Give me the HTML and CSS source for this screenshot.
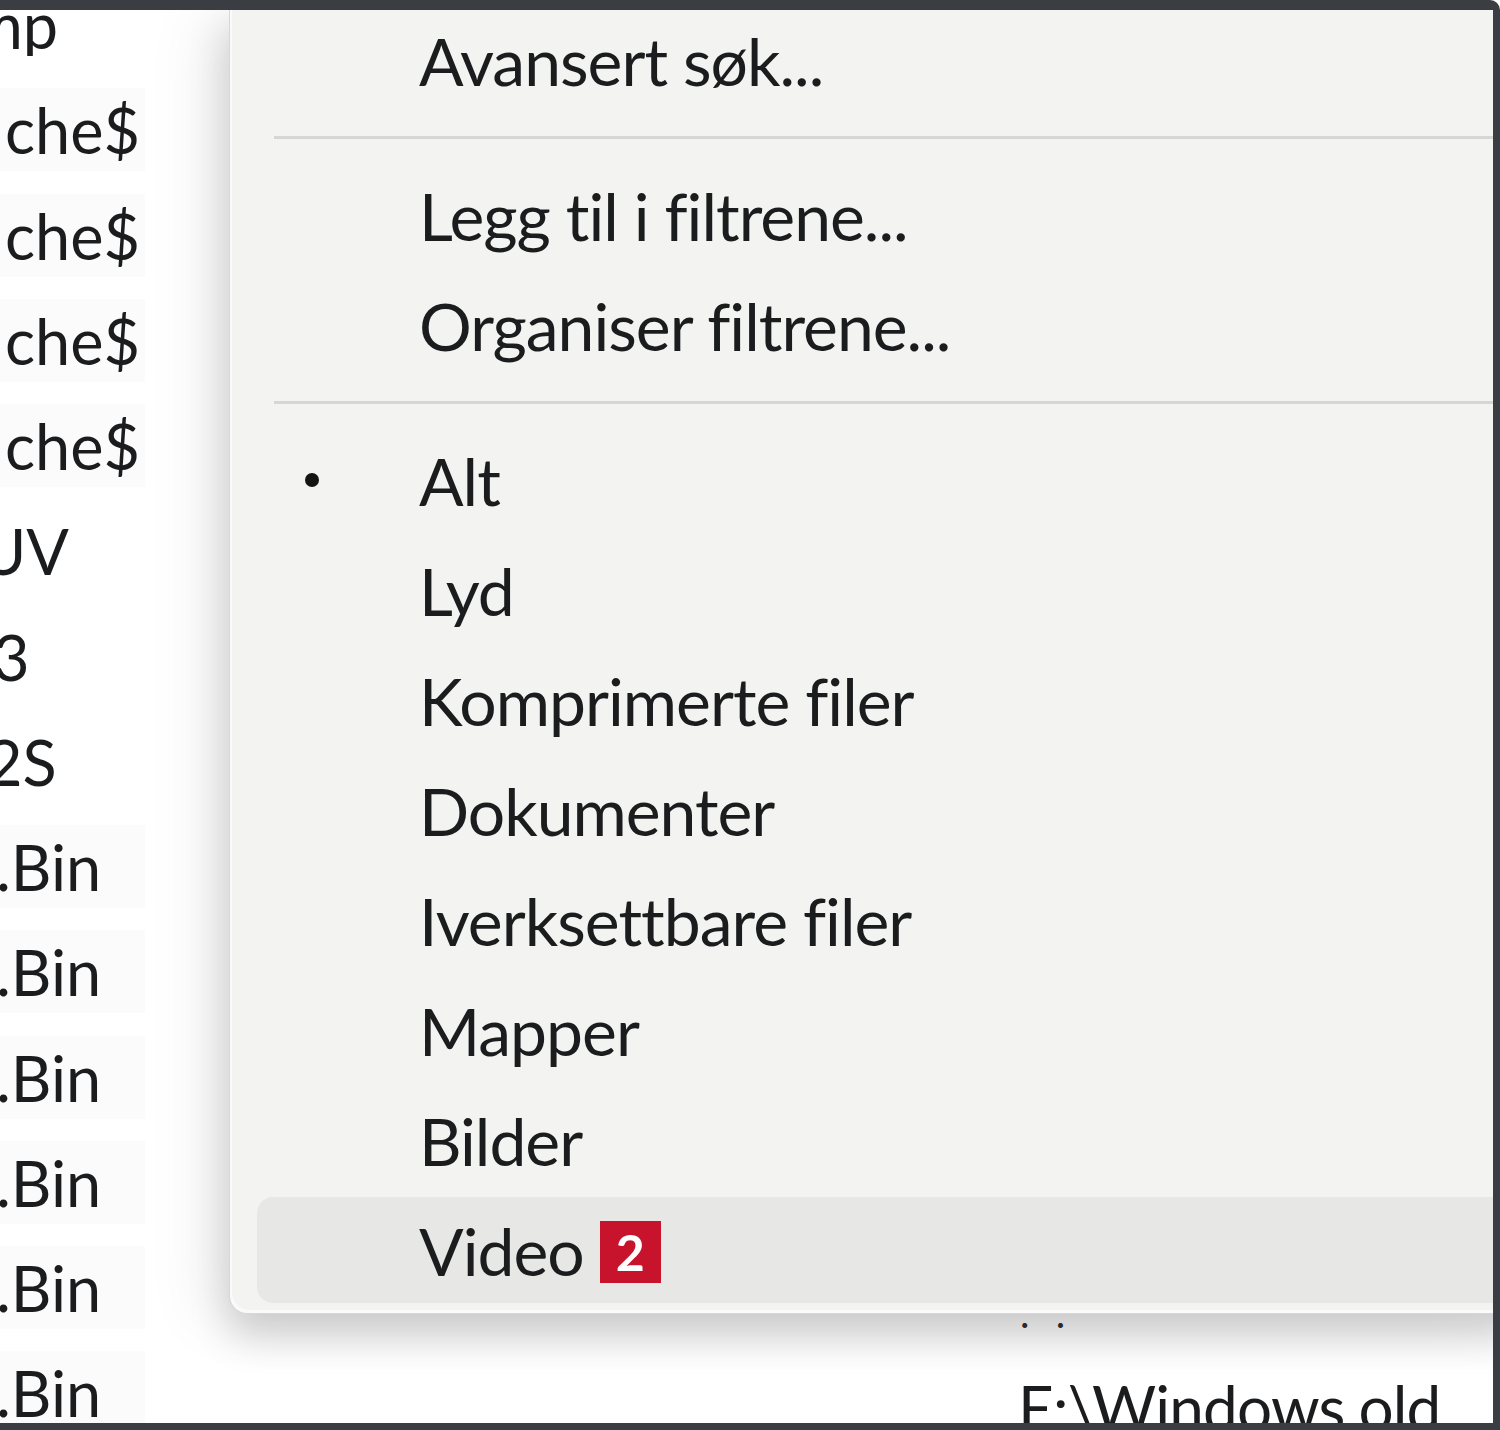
FILE: index.html
```html
<!DOCTYPE html>
<html lang="no">
<head>
<meta charset="utf-8">
<title>Filtermeny</title>
<link rel="stylesheet" href="styles.css">
</head>
<body>
<div class="frame">
  <div class="list">
    <div class="row first"><span class="name cut-m">mp</span><span class="loc"></span></div>
    <div class="row"><span class="name hl">che$</span><span class="loc"></span></div>
    <div class="row"><span class="name hl">che$</span><span class="loc"></span></div>
    <div class="row"><span class="name hl">che$</span><span class="loc"></span></div>
    <div class="row"><span class="name hl">che$</span><span class="loc"></span></div>
    <div class="row"><span class="name cut-u">UV</span><span class="loc"></span></div>
    <div class="row"><span class="name cut-3">3</span><span class="loc"></span></div>
    <div class="row"><span class="name cut-2">2S</span><span class="loc"></span></div>
    <div class="row"><span class="name cut-dot hl">.Bin</span><span class="loc"></span></div>
    <div class="row"><span class="name cut-dot hl">.Bin</span><span class="loc"></span></div>
    <div class="row"><span class="name cut-dot hl">.Bin</span><span class="loc"></span></div>
    <div class="row"><span class="name cut-dot hl">.Bin</span><span class="loc"></span></div>
    <div class="row"><span class="name cut-dot hl">.Bin</span><span class="loc"><span class="dots">. .</span></span></div>
    <div class="row"><span class="name cut-dot hl">.Bin</span><span class="loc">E:\Windows.old</span></div>
  </div>

  <div class="menu">
    <div class="item">Avansert søk...</div>
    <div class="sep"></div>
    <div class="item">Legg til i filtrene...</div>
    <div class="item">Organiser filtrene...</div>
    <div class="sep"></div>
    <div class="item checked"><span class="bullet"></span>Alt</div>
    <div class="item">Lyd</div>
    <div class="item">Komprimerte filer</div>
    <div class="item">Dokumenter</div>
    <div class="item">Iverksettbare filer</div>
    <div class="item">Mapper</div>
    <div class="item">Bilder</div>
    <div class="item active">Video <span class="badge">2</span></div>
  </div>
</div>
</body>
</html>
```

FILE: styles.css
```css
* { box-sizing: border-box; }

html, body {
  margin: 0;
  padding: 0;
  background: #ffffff;
}

body {
  width: 1500px;
  height: 1430px;
  overflow: hidden;
  font-family: Lato, "Noto Sans", "Liberation Sans", sans-serif;
  font-variant-ligatures: none;
  color: #1b1c1e;
}

.frame {
  position: relative;
  width: 1500px;
  height: 1430px;
  overflow: hidden;
  background: #ffffff;
  border-top: 10px solid #3a3e43;
  border-right: 7px solid #3a3e43;
  border-bottom: 7px solid #3a3e43;
  border-top-right-radius: 10px;
}

/* ---------- file list underneath ---------- */
.list {
  display: flex;
  flex-direction: column;
  margin-top: -38px;
}

.row {
  height: 105.25px;
  display: flex;
  align-items: center;
  font-size: 63px;
  line-height: 1;
  white-space: nowrap;
}

.name {
  display: block;
  width: 230px;
  padding-left: 5px;
  overflow: hidden;
}

.name.hl {
  background: #fbfbfb;
  width: 145px;
  margin-right: 85px;
  padding-top: 10px;
  padding-bottom: 10px;
}

.cut-m { text-indent: -34px; }
.cut-u { text-indent: -25px; }
.cut-3 { text-indent: -12px; }
.cut-2 { text-indent: -19px; }
.cut-dot { text-indent: -9px; }

.loc {
  margin-left: 788px;
  font-size: 62px;
  letter-spacing: -0.8px;
  position: relative;
  top: 14px;
}

.dots {
  font-size: 40px;
  letter-spacing: 8px;
  position: relative;
  top: 2px;
  left: 2px;
  color: #333;
}

/* ---------- filter menu ---------- */
.menu {
  position: absolute;
  left: 229px;
  top: -5px;
  right: -40px;
  padding-bottom: 8px;
  background: #f3f4f2;
  border-left: 1px solid #d6d7d6;
  border-bottom: 1px solid #d6d7d6;
  border-bottom-left-radius: 18px;
  box-shadow:
    inset 2px -3px 0 #fafafa,
    0 22px 40px rgba(0, 0, 0, 0.18),
    -30px 10px 60px rgba(0, 0, 0, 0.06);
  display: flex;
  flex-direction: column;
}

.item {
  position: relative;
  height: 110px;
  display: flex;
  align-items: center;
  padding-left: 189px;
  font-size: 66px;
  letter-spacing: -1px;
  white-space: nowrap;
}

.sep {
  height: 45px;
  margin-left: 44px;
  display: flex;
  align-items: center;
}

.sep::before {
  content: "";
  display: block;
  width: 100%;
  height: 3px;
  background: #d5d6d5;
}

.bullet {
  position: absolute;
  left: 75px;
  top: 48px;
  width: 14px;
  height: 14px;
  border-radius: 50%;
  background: #141414;
}

.item.active {
  margin: 0 0 0 27px;
  padding-left: 162px;
  background: #e7e8e6;
  border-radius: 16px;
  height: 106px;
  margin-top: 2px;
  margin-bottom: 2px;
}

.badge {
  display: inline-flex;
  align-items: center;
  justify-content: center;
  width: 61px;
  height: 62px;
  margin-left: 16px;
  background: #c8132c;
  color: #ffffff;
  font-size: 50px;
  font-weight: 700;
  letter-spacing: 0;
  position: relative;
  top: 2px;
}
```
